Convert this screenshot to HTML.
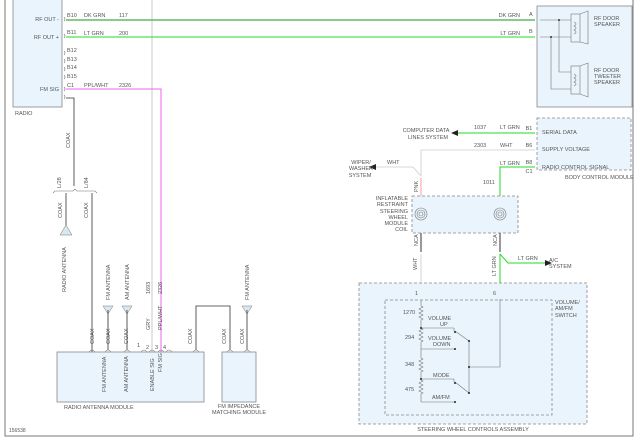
<!DOCTYPE html>
<html><head><style>
html,body{margin:0;padding:0;background:#fff;}
svg{display:block;font-family:"Liberation Sans",sans-serif;}
text{font-size:5.5px;fill:#555;}
</style></head><body>
<svg width="641" height="442" viewBox="0 0 641 442">
<rect width="641" height="442" fill="#fff"/>
<!-- frame -->
<path d="M5 0V436H633V0" fill="none" stroke="#777" stroke-width="1"/>
<line x1="152" y1="0" x2="152" y2="372" stroke="#bbb" stroke-width="0.8"/>

<!-- radio -->
<rect x="13" y="-2" width="49" height="109" fill="#e9f4fc" stroke="#888" stroke-width="0.8"/>
<text x="15" y="115">RADIO</text>
<text x="59" y="21" text-anchor="end">RF OUT -</text>
<text x="59" y="39" text-anchor="end">RF OUT +</text>
<text x="59" y="91" text-anchor="end">FM SIG</text>
<g fill="none" stroke="#777" stroke-width="0.6">
<path d="M64 17q2 2 0 4M64 34q2 2 0 4M64 51q2 2 0 4M64 59q2 2 0 4M64 67q2 2 0 4M64 75q2 2 0 4M64 87q2 2 0 4M64 95q2 2 0 4"/>
</g>
<text x="67" y="17">B10</text><text x="67" y="34">B11</text><text x="67" y="52">B12</text><text x="67" y="61">B13</text><text x="67" y="69">B14</text><text x="67" y="78">B15</text><text x="67" y="87">C1</text>
<text x="84" y="17">DK GRN</text><text x="119" y="17">117</text>
<text x="84" y="35">LT GRN</text><text x="119" y="35">200</text>
<text x="84" y="87">PPL/WHT</text><text x="119" y="87">2326</text>
<line x1="66" y1="20" x2="535" y2="20" stroke="#4a4" stroke-width="1.2"/>
<line x1="66" y1="37" x2="535" y2="37" stroke="#2d2" stroke-width="1"/>
<text x="520" y="17" text-anchor="end">DK GRN</text><text x="520" y="35" text-anchor="end">LT GRN</text>
<text x="529" y="16">A</text><text x="529" y="33">B</text>
<path d="M66 89H161V372" fill="none" stroke="#e6e" stroke-width="1"/>
<path d="M66 98H74V186" fill="none" stroke="#333" stroke-width="0.8"/>
<text transform="translate(70,148) rotate(-90)">COAX</text>
<path d="M53 193l2-2h18l2 -2l2 2h18l2 2" fill="none" stroke="#777" stroke-width="0.6"/>
<text transform="translate(61,188) rotate(-90)">L/28</text>
<text transform="translate(88,188) rotate(-90)">L/84</text>
<line x1="66" y1="193" x2="66" y2="232" stroke="#333" stroke-width="0.8"/>
<line x1="92" y1="193" x2="92" y2="352" stroke="#333" stroke-width="0.8"/>
<text transform="translate(62,218) rotate(-90)">COAX</text>
<text transform="translate(88,218) rotate(-90)">COAX</text>
<path d="M60 235l6-10l6 10z" fill="#d8e8f0" stroke="#777" stroke-width="0.5"/>
<text transform="translate(66,292) rotate(-90)">RADIO ANTENNA</text>

<!-- radio antenna module -->
<rect x="57" y="352" width="147" height="50" fill="#e9f4fc" stroke="#888" stroke-width="0.8"/>
<text x="64" y="409">RADIO ANTENNA MODULE</text>
<path d="M103 306h10l-5 8z M122 306h10l-5 8z M242 306h10l-5 8z" fill="#d8e8f0" stroke="#777" stroke-width="0.5"/>
<line x1="108" y1="310" x2="108" y2="350" stroke="#555" stroke-width="1"/>
<line x1="127" y1="310" x2="127" y2="350" stroke="#333" stroke-width="0.8"/>
<line x1="247" y1="310" x2="247" y2="350" stroke="#333" stroke-width="0.8"/>
<text transform="translate(110,300) rotate(-90)">FM ANTENNA</text>
<text transform="translate(129,300) rotate(-90)">AM ANTENNA</text>
<text transform="translate(249,300) rotate(-90)">FM ANTENNA</text>
<text transform="translate(94,344) rotate(-90)">COAX</text>
<text transform="translate(110,344) rotate(-90)">COAX</text>
<text transform="translate(128,344) rotate(-90)">COAX</text>
<text transform="translate(192,344) rotate(-90)">COAX</text>
<text transform="translate(226,344) rotate(-90)">COAX</text>
<text transform="translate(244,344) rotate(-90)">COAX</text>
<text transform="translate(150,330) rotate(-90)">GRY</text>
<text transform="translate(150,294) rotate(-90)">1693</text>
<text transform="translate(162,330) rotate(-90)">PPL/WHT</text>
<text transform="translate(162,294) rotate(-90)">2326</text>
<text x="137" y="347">1</text><text x="146" y="349">2</text><text x="155" y="349">3</text><text x="163" y="349">4</text>
<path d="M196 350V306H230V350" fill="none" stroke="#333" stroke-width="0.8"/>
<g fill="none" stroke="#777" stroke-width="0.6">
<path d="M89 352q3-4 6 0M105 352q3-4 6 0M124 352q3-4 6 0M141 352q3-4 6 0M149 352q3-4 6 0M158 352q3-4 6 0M166 352q3-4 6 0M193 352q3-4 6 0M227 352q3-4 6 0M244 352q3-4 6 0"/>
</g>
<text transform="translate(106,392) rotate(-90)">FM ANTENNA</text>
<text transform="translate(128,392) rotate(-90)">AM ANTENNA</text>
<text transform="translate(154,391) rotate(-90)">ENABLE SIG</text>
<text transform="translate(162,372) rotate(-90)">FM SIG</text>
<rect x="222" y="352" width="34" height="50" fill="#e9f4fc" stroke="#888" stroke-width="0.8"/>
<text x="239" y="408" text-anchor="middle">FM IMPEDANCE</text>
<text x="239" y="414" text-anchor="middle">MATCHING MODULE</text>
<text x="9" y="432" style="font-size:5px">156538</text>

<!-- speaker box -->
<rect x="537" y="6" width="95" height="101" fill="#e9f4fc" stroke="#888" stroke-width="0.8"/>
<g stroke="#777" stroke-width="0.6" fill="none">
<path d="M540 20H571M540 37H571M559 20V72H571M551 37V89H571"/>
<rect x="571" y="14" width="9" height="28"/><path d="M580 14L588 11V44L580 42"/>
<rect x="571" y="66" width="9" height="28"/><path d="M580 66L588 63V97L580 94"/>
<path d="M574 22q4 2 0 4q4 2 0 4q4 2 0 4M574 74q4 2 0 4q4 2 0 4q4 2 0 4"/>
</g>
<circle cx="559" cy="20" r="1" fill="#333"/><circle cx="551" cy="37" r="1" fill="#333"/>
<text x="594" y="20">RF DOOR</text><text x="594" y="26">SPEAKER</text>
<text x="594" y="72">RF DOOR</text><text x="594" y="78">TWEETER</text><text x="594" y="84">SPEAKER</text>

<!-- BCM -->
<rect x="537" y="118" width="94" height="52" fill="#e9f4fc" stroke="#888" stroke-width="0.8" stroke-dasharray="3,2"/>
<text x="542" y="134">SERIAL DATA</text><text x="542" y="151">SUPPLY VOLTAGE</text><text x="542" y="169">RADIO CONTROL SIGNAL</text>
<text x="565" y="179">BODY CONTROL MODULE</text>
<text x="529" y="130" text-anchor="middle">B1</text><text x="529" y="147" text-anchor="middle">B6</text><text x="529" y="164" text-anchor="middle">B8</text><text x="529" y="173" text-anchor="middle">C1</text>
<line x1="458" y1="133" x2="535" y2="133" stroke="#2d2" stroke-width="1"/>
<path d="M451 133l7-3v6z" fill="#222"/>
<text x="426" y="132" text-anchor="middle">COMPUTER DATA</text><text x="428" y="139" text-anchor="middle">LINES SYSTEM</text>
<text x="474" y="129">1037</text><text x="500" y="129">LT GRN</text>
<text x="474" y="147">2303</text><text x="500" y="147">WHT</text>
<path d="M535 150H421V176" fill="none" stroke="#ccc" stroke-width="0.8"/>
<path d="M375 167H413L421 176" fill="none" stroke="#ccc" stroke-width="0.8"/>
<path d="M369 167l7-3v6z" fill="#222"/>
<text x="387" y="164">WHT</text>
<text x="361" y="164" text-anchor="middle">WIPER/</text><text x="361" y="170" text-anchor="middle">WASHER</text><text x="360" y="177" text-anchor="middle">SYSTEM</text>
<text x="500" y="165">LT GRN</text>
<path d="M535 167H500V214" fill="none" stroke="#2d2" stroke-width="1"/>
<text x="483" y="184">1011</text>
<line x1="421" y1="178" x2="421" y2="214" stroke="#f9a" stroke-width="1"/>
<text transform="translate(418,192) rotate(-90)">PNK</text>

<!-- coil -->
<rect x="412" y="196" width="106" height="37" fill="#e9f4fc" stroke="#888" stroke-width="0.8" stroke-dasharray="3,2"/>
<text x="408" y="200" text-anchor="end">INFLATABLE</text><text x="408" y="206" text-anchor="end">RESTRAINT</text><text x="408" y="213" text-anchor="end">STEERING</text><text x="408" y="219" text-anchor="end">WHEEL</text><text x="408" y="225" text-anchor="end">MODULE</text><text x="408" y="231" text-anchor="end">COIL</text>
<g fill="none" stroke="#777" stroke-width="0.6">
<circle cx="421" cy="214" r="6"/><circle cx="421" cy="214" r="4"/><circle cx="421" cy="214" r="2"/>
<circle cx="500" cy="214" r="6"/><circle cx="500" cy="214" r="4"/><circle cx="500" cy="214" r="2"/>
</g>
<line x1="421" y1="233" x2="421" y2="252" stroke="#333" stroke-width="1"/>
<line x1="500" y1="233" x2="500" y2="252" stroke="#333" stroke-width="1"/>
<text transform="translate(418,246) rotate(-90)">NCA</text><text transform="translate(497,246) rotate(-90)">NCA</text>
<line x1="421" y1="254" x2="421" y2="299" stroke="#ccc" stroke-width="0.8"/>
<path d="M500 254V299M500 254L508 263H545" fill="none" stroke="#2d2" stroke-width="1"/>
<path d="M552 263l-7-3v6z" fill="#222"/>
<text x="518" y="260">LT GRN</text><text x="549" y="262">A/C</text><text x="549" y="268">SYSTEM</text>
<text transform="translate(417,270) rotate(-90)">WHT</text><text transform="translate(496,276) rotate(-90)">LT GRN</text>

<!-- SWC -->
<rect x="359" y="283" width="228" height="141" fill="#e9f4fc" stroke="#888" stroke-width="0.8" stroke-dasharray="3,2"/>
<rect x="385" y="300" width="167" height="115" fill="#e9f4fc" stroke="#888" stroke-width="0.8" stroke-dasharray="3,2"/>
<text x="415" y="295">1</text><text x="493" y="295">6</text>
<text x="555" y="304">VOLUME/</text><text x="555" y="310">AM/FM</text><text x="555" y="317">SWITCH</text>
<text x="473" y="431" text-anchor="middle">STEERING WHEEL CONTROLS ASSEMBLY</text>
<g fill="none" stroke="#777" stroke-width="0.6">
<path d="M421 300V306l2 1-4 2 4 2-4 2 4 2-4 2 4 2-2 1V328l2 1-4 2 4 2-4 2 4 2-4 2 4 2-2 1V358l2 1-4 2 4 2-4 2 4 2-4 2 4 2-2 1V380l2 1-4 2 4 2-4 2 4 2-4 2 4 2-2 1V402"/>
<path d="M421 328H454M421 349H455M421 379H454M421 402H455M454 328V331M455 331L469 341M469 341V393M454 379V382M455 382L469 393M469 367H500V299"/>
</g>
<g fill="#222"><circle cx="421" cy="328" r="1"/><circle cx="455" cy="349" r="1"/><circle cx="421" cy="379" r="1"/><circle cx="455" cy="402" r="1"/><circle cx="469" cy="341" r="1"/><circle cx="469" cy="393" r="1"/><circle cx="469" cy="367" r="1"/><circle cx="455" cy="332" r="1"/><circle cx="455" cy="383" r="1"/></g>
<text x="403" y="314">1270</text><text x="405" y="339">294</text><text x="405" y="366">348</text><text x="405" y="391">475</text>
<text x="428" y="320">VOLUME</text><text x="440" y="326">UP</text>
<text x="428" y="340">VOLUME</text><text x="433" y="346">DOWN</text>
<text x="433" y="377">MODE</text><text x="432" y="399">AM/FM</text>
</svg>
</body></html>
